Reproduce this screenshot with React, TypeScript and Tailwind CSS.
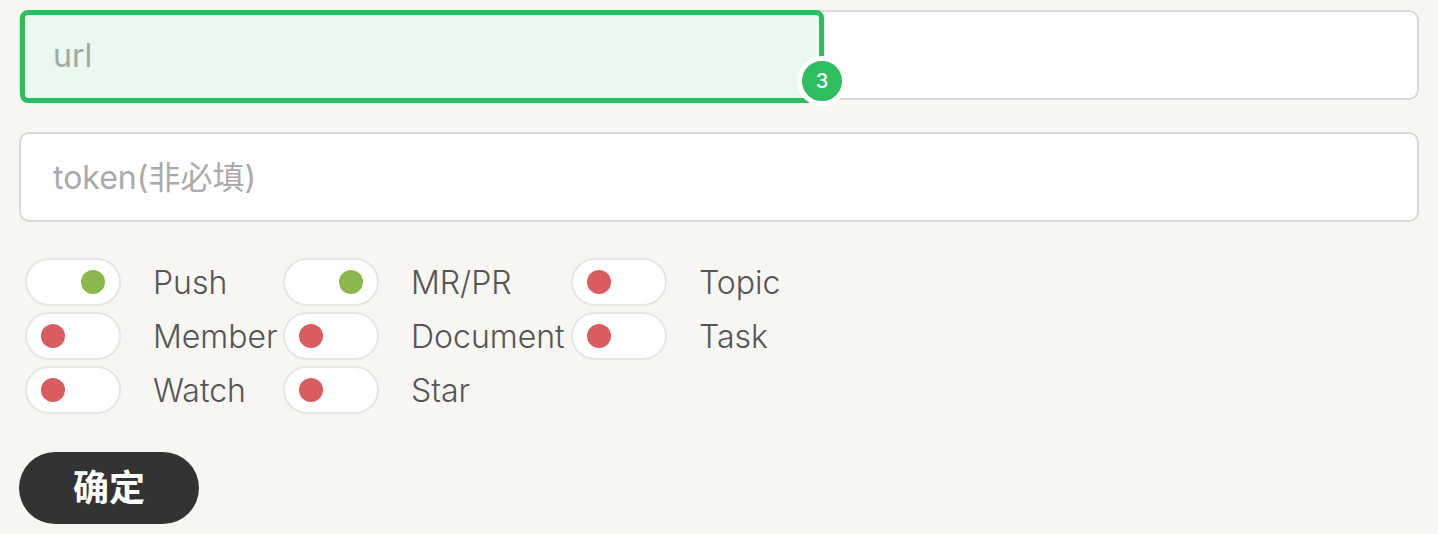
import { useState } from "react";

type EventOption = { name: string; on: boolean };

const initialEvents: EventOption[] = [
  { name: "Push", on: true },
  { name: "MR/PR", on: true },
  { name: "Topic", on: false },
  { name: "Member", on: false },
  { name: "Document", on: false },
  { name: "Task", on: false },
  { name: "Watch", on: false },
  { name: "Star", on: false },
];

const fieldClass =
  "block h-[90px] w-full rounded-[10px] border-2 border-[#d9d9d9] bg-white px-8 text-[32px] font-normal text-[#333333] outline-none placeholder:text-[#aaaaaa] placeholder:opacity-100";

function Toggle({ name, on, onChange }: EventOption & { onChange: () => void }) {
  return (
    <label className="flex h-12 cursor-pointer items-center gap-8 whitespace-nowrap text-[32px] font-light text-[#555555]">
      <input
        type="checkbox"
        role="switch"
        checked={on}
        onChange={onChange}
        className="m-0 block h-12 w-24 shrink-0 cursor-pointer appearance-none rounded-full border-2 border-[#e6e6e6] bg-white px-3.5 py-2.5 before:block before:size-6 before:rounded-full before:bg-[#db5c5e] before:content-[''] checked:before:translate-x-10 checked:before:bg-[#8bb84c]"
      />
      <span className="pt-0.5">{name}</span>
    </label>
  );
}

export default function App() {
  const [events, setEvents] = useState(initialEvents);

  const toggle = (name: string) =>
    setEvents(events.map((e) => (e.name === name ? { ...e, on: !e.on } : e)));

  return (
    <main className="min-h-screen bg-[#f7f6f2] px-[19px] py-2.5 font-['Inter','Noto_Sans_CJK_SC',sans-serif]">
      <form onSubmit={(e) => e.preventDefault()}>
        <div className="flex flex-col gap-8">
          <div className="relative">
            <input type="text" aria-label="url" placeholder="url" className={fieldClass} />
            <div className="pointer-events-none absolute top-0 left-px h-[93px] w-[804px] rounded-[8px] border-5 border-[#2dbe60] bg-[#2dbe60]/10">
              <span className="absolute -right-7 -bottom-2 flex size-[50px] items-center justify-center rounded-full border-5 border-white bg-[#2dbe60] text-xl font-medium text-white">
                3
              </span>
            </div>
          </div>
          <input
            type="text"
            aria-label="token(非必填)"
            placeholder="token(非必填)"
            className={fieldClass}
          />
        </div>
        <div className="mt-9 grid grid-cols-[258px_288px_auto] gap-y-1.5 pl-1.5">
          {events.map((e) => (
            <Toggle key={e.name} {...e} onChange={() => toggle(e.name)} />
          ))}
        </div>
        <button
          type="submit"
          className="mt-[38px] flex h-[72px] w-[180px] items-center justify-center rounded-full bg-[#333333] text-4xl font-bold text-white"
        >
          确定
        </button>
      </form>
    </main>
  );
}
